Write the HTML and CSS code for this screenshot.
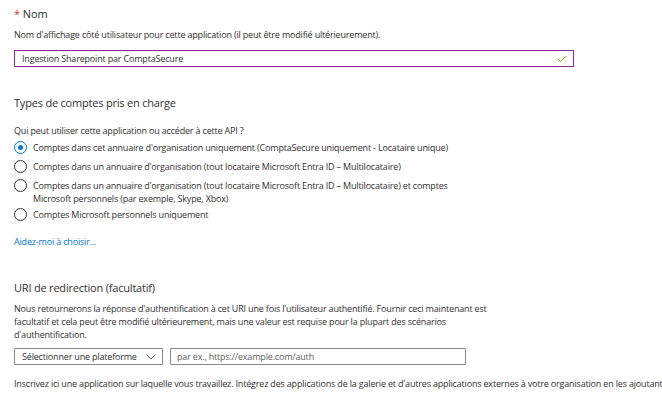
FILE: index.html
```html
<!DOCTYPE html>
<html lang="fr">
<head>
    <meta charset="UTF-8">
    <meta name="viewport" content="width=device-width, initial-scale=1.0">
    <title>Inscrire une application</title>
    <link rel="stylesheet" href="styles.css">
</head>
<body>
    <div class="page">
        <section class="field-name">
            <div class="label"><span class="required">*</span> Nom</div>
            <p class="hint">Nom d'affichage côté utilisateur pour cette application (il peut être modifié ultérieurement).</p>
            <div class="text-box valid">
                <span class="value">Ingestion Sharepoint par ComptaSecure</span>
                <svg class="check" width="10" height="8" viewBox="0 0 10 8">
                    <path d="M1 4.2 L3.6 6.6 L9 1.2" fill="none" stroke="#6bb700" stroke-width="1"/>
                </svg>
            </div>
        </section>

        <section class="accounts">
            <h2 class="section-title">Types de comptes pris en charge</h2>
            <p class="question">Qui peut utiliser cette application ou accéder à cette API ?</p>
            <div class="choices">
                <label class="choice">
                    <span class="radio checked"></span>
                    <span class="choice-text">Comptes dans cet annuaire d'organisation uniquement (ComptaSecure uniquement - Locataire unique)</span>
                </label>
                <label class="choice">
                    <span class="radio"></span>
                    <span class="choice-text">Comptes dans un annuaire d'organisation (tout locataire Microsoft Entra ID – Multilocataire)</span>
                </label>
                <label class="choice">
                    <span class="radio"></span>
                    <span class="choice-text">Comptes dans un annuaire d'organisation (tout locataire Microsoft Entra ID – Multilocataire) et comptes<br>Microsoft personnels (par exemple, Skype, Xbox)</span>
                </label>
                <label class="choice">
                    <span class="radio"></span>
                    <span class="choice-text">Comptes Microsoft personnels uniquement</span>
                </label>
            </div>
            <a class="help-link" href="#">Aidez-moi à choisir...</a>
        </section>

        <section class="redirect">
            <h2 class="section-title">URI de redirection (facultatif)</h2>
            <p class="para">Nous retournerons la réponse d'authentification à cet URI une fois l'utilisateur authentifié. Fournir ceci maintenant est<br>facultatif et cela peut être modifié ultérieurement, mais une valeur est requise pour la plupart des scénarios<br>d'authentification.</p>
            <div class="uri-row">
                <div class="dropdown">
                    <span>Sélectionner une plateforme</span>
                    <svg width="10" height="6" viewBox="0 0 10 6">
                        <path d="M0.5 0.5 L5 5 L9.5 0.5" fill="none" stroke="#605e5c" stroke-width="1"/>
                    </svg>
                </div>
                <div class="uri-box">par ex., https://example.com/auth</div>
            </div>
        </section>

        <p class="footer-note">Inscrivez ici une application sur laquelle vous travaillez. Intégrez des applications de la galerie et d'autres applications externes à votre organisation en les ajoutant</p>
    </div>
</body>
</html>
```

FILE: styles.css
```css
body {
    margin: 0;
    font-family: "Open Sans", "Noto Sans", sans-serif;
    font-size: 9px;
    letter-spacing: -0.18px;
    color: #323130;
    background: #fff;
}
.page {
    padding: 6px 14px 0 14px;
    overflow: hidden;
    height: 393px;
}
p {
    margin: 0;
}
.label {
    font-size: 11px;
    line-height: 16px;
    letter-spacing: -0.1px;
}
.required {
    color: #d13438;
}
.hint {
    margin-top: 6px;
    line-height: 13px;
}
.text-box {
    margin-top: 9px;
    height: 15px;
    border: 1px solid #8a2da5;
    display: flex;
    align-items: center;
    justify-content: space-between;
    padding: 0 6px 0 7px;
    box-sizing: content-box;
    width: 545px;
}
.check {
    display: block;
}
.section-title {
    font-size: 11px;
    font-weight: normal;
    line-height: 16px;
    letter-spacing: -0.2px;
    margin: 0;
}
.accounts {
    margin-top: 28px;
}
.question {
    margin-top: 13px;
    line-height: 13px;
}
.choices {
    margin-top: 4px;
    display: flex;
    flex-direction: column;
    gap: 6px;
}
.choice {
    display: flex;
    align-items: flex-start;
    gap: 6px;
    line-height: 13px;
}
.choice:last-child {
    margin-top: -3px;
}
.radio {
    width: 11px;
    height: 11px;
    border: 1px solid #323130;
    border-radius: 50%;
    flex-shrink: 0;
    position: relative;
    box-sizing: content-box;
}
.radio.checked {
    border-color: #0078d4;
}
.radio.checked::after {
    content: "";
    position: absolute;
    left: 3px;
    top: 3px;
    width: 5px;
    height: 5px;
    border-radius: 50%;
    background: #0078d4;
}
.help-link {
    display: block;
    margin-top: 14px;
    color: #0078d4;
    text-decoration: none;
    line-height: 13px;
}
.redirect {
    margin-top: 32px;
}
.para {
    margin-top: 6px;
    line-height: 13px;
}
.uri-row {
    margin-top: 7px;
    display: flex;
    gap: 7px;
}
.dropdown {
    width: 134px;
    height: 15px;
    border: 1px solid #8a8886;
    border-radius: 1px;
    display: flex;
    align-items: center;
    justify-content: space-between;
    padding: 0 6px 0 7px;
    box-sizing: content-box;
}
.dropdown svg {
    display: block;
}
.uri-box {
    width: 288px;
    height: 15px;
    line-height: 15px;
    border: 1px solid #8a8886;
    border-radius: 1px;
    padding-left: 6px;
    color: #605e5c;
}
.footer-note {
    margin-top: 12px;
    line-height: 13px;
    white-space: nowrap;
}
```
